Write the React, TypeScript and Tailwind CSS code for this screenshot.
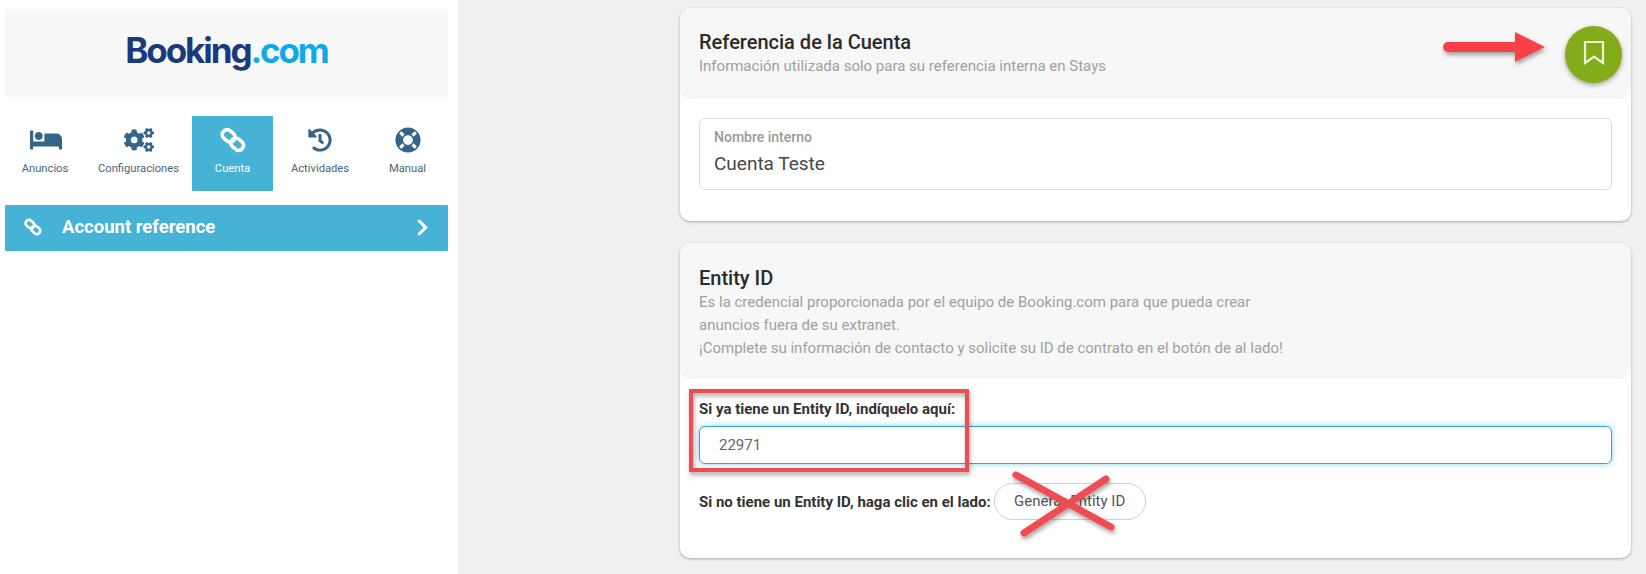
import React from "react";
import { FaBed, FaCogs, FaHistory, FaLifeRing, FaChevronRight } from "react-icons/fa";

function ChainIcon({ size }: { size: number }) {
  return (
    <svg width={size} height={size} viewBox="0 0 25 25" fill="none" stroke="currentColor" strokeWidth="3.6">
      <rect x="1.8" y="3.8" width="13" height="9.4" rx="4.6" transform="rotate(40 8.3 8.5)" />
      <rect x="10" y="11.8" width="13" height="9.4" rx="4.6" transform="rotate(40 16.5 16.5)" />
    </svg>
  );
}

const tabs = [
  { label: "Anuncios", icon: <FaBed size={32} className="ml-[2px]" />, w: "w-[80px]" },
  { label: "Configuraciones", icon: <FaCogs size={30} />, w: "w-[107px]" },
  { label: "Cuenta", icon: <ChainIcon size={26} />, w: "w-[81px]", active: true },
  { label: "Actividades", icon: <FaHistory size={24} />, w: "w-[94px]" },
  { label: "Manual", icon: <FaLifeRing size={26} />, w: "w-[81px]" },
];

export default function App() {
  return (
    <div className="relative flex h-[574px] w-[1646px] overflow-hidden bg-[#f0f0f0] font-['Roboto',sans-serif]">
      <aside className="h-full w-[458px] shrink-0 bg-white pl-[5px] pr-[10px] pt-[9px]">
        <div className="flex h-[88px] items-center justify-center bg-[#f8f8f8] pb-[6px]">
          <span className="font-['Inter',sans-serif] text-[35px] font-bold leading-none tracking-[-2.1px]">
            <span className="text-[#1b3a7d]">Booking</span>
            <span className="text-[#0fa9e9]">.com</span>
          </span>
        </div>
        <nav className="mt-[19px] flex h-[75px] items-stretch">
          {tabs.map(({ label, icon, w, active }) => (
            <div
              key={label}
              className={`${w} flex flex-col items-center rounded-[1px] pt-[9px] ${active ? "bg-[#45b2d6] text-white" : "text-[#33658a]"}`}
            >
              <div className="flex h-[30px] items-center justify-center">{icon}</div>
              <span className={`mt-[7px] whitespace-nowrap text-[11.2px] leading-[14px] ${active ? "text-white" : "text-[#4d6577]"}`}>{label}</span>
            </div>
          ))}
        </nav>
        <div className="mt-[14px] flex h-[46px] items-center rounded-[1px] bg-[#45b2d6] pb-[2px] pl-[19px] pr-[16px] text-white">
          <ChainIcon size={18} />
          <span className="ml-[20px] flex-1 text-[18.5px] font-bold leading-none">Account reference</span>
          <FaChevronRight size={19} />
        </div>
      </aside>

      <main className="flex-1 pl-[222px] pt-[8px]">
        <section className="h-[213px] w-[951px] rounded-[10px] bg-white shadow-[0_1px_3px_rgba(0,0,0,0.3)]">
          <header className="h-[91px] rounded-[10px] bg-[#f7f7f7] px-[19px] pt-[22px]">
            <h2 className="text-[20px] font-medium leading-[24px] text-[#2b2b2b]">Referencia de la Cuenta</h2>
            <p className="mt-[2px] text-[15px] leading-[20px] text-[#a0a0a0]">Información utilizada solo para su referencia interna en Stays</p>
          </header>
          <div className="px-[19px] pt-[19px]">
            <div className="h-[72px] rounded-[6px] border border-[#dcdcdc] px-[14px] pt-[9px]">
              <div className="text-[14px] font-medium leading-[18px] text-[#9a9a9a]">Nombre interno</div>
              <div className="mt-[6px] text-[19px] leading-[24px] text-[#484848]">Cuenta Teste</div>
            </div>
          </div>
        </section>

        <section className="mt-[22px] h-[315px] w-[951px] rounded-[10px] bg-white shadow-[0_1px_3px_rgba(0,0,0,0.3)]">
          <header className="h-[136px] rounded-[10px] bg-[#f7f7f7] px-[19px] pt-[23px]">
            <h2 className="text-[20px] font-medium leading-[24px] text-[#2b2b2b]">Entity ID</h2>
            <p className="mt-[1px] text-[15px] leading-[23px] text-[#a0a0a0]">
              Es la credencial proporcionada por el equipo de Booking.com para que pueda crear
              <br />
              anuncios fuera de su extranet.
              <br />
              ¡Complete su información de contacto y solicite su ID de contrato en el botón de al lado!
            </p>
          </header>
          <div className="px-[19px] pt-[19px]">
            <div className="text-[15px] font-bold leading-[22px] text-[#333]">Si ya tiene un Entity ID, indíquelo aquí:</div>
            <div className="mt-[6px] flex h-[38px] items-center rounded-[6px] border border-[#3ba3cc] pl-[19px] text-[15px] text-[#666] shadow-[0_0_6px_rgba(69,178,214,0.6)]">22971</div>
            <div className="mt-[19px] flex items-center">
              <span className="text-[15px] font-bold leading-[20px] text-[#333]">Si no tiene un Entity ID, haga clic en el lado:</span>
              <span className="ml-[3px] flex h-[37px] w-[152px] items-center justify-center rounded-full border border-[#d0d0d0] text-[15px] text-[#555]">Generar Entity ID</span>
            </div>
          </div>
        </section>
      </main>

      <button className="absolute left-[1565px] top-[26px] flex h-[57px] w-[57px] items-center justify-center rounded-full bg-[#82ad18] pb-[3px] shadow-[0_2px_5px_rgba(0,0,0,0.35)]">
        <svg width="24" height="26" viewBox="0 0 24 26" fill="none" stroke="#eef4d8" strokeWidth="2.2">
          <path d="M3 2 H21 V23 L12 16.5 L3 23 Z" />
        </svg>
      </button>

      {/* red annotations */}
      <svg className="pointer-events-none absolute left-0 top-0" width="1646" height="574" fill="none">
        <defs>
          <filter id="s" x="-20%" y="-20%" width="140%" height="140%">
            <feDropShadow dx="1" dy="3" stdDeviation="2" floodColor="#000" floodOpacity="0.35" />
          </filter>
        </defs>
        <g filter="url(#s)">
          <path d="M1515 32 L1545 47 L1515 62 Z" fill="#f8404a" />
          <line x1="1448" y1="47" x2="1520" y2="47" stroke="#f8404a" strokeWidth="10" strokeLinecap="round" />
          <rect x="691" y="391" width="276" height="79" stroke="#ee4d52" strokeWidth="4" />
          <line x1="1016" y1="475" x2="1111" y2="527" stroke="#ee4d52" strokeWidth="7" strokeLinecap="round" />
          <line x1="1024" y1="533" x2="1106" y2="479" stroke="#ee4d52" strokeWidth="7" strokeLinecap="round" />
        </g>
      </svg>
    </div>
  );
}
